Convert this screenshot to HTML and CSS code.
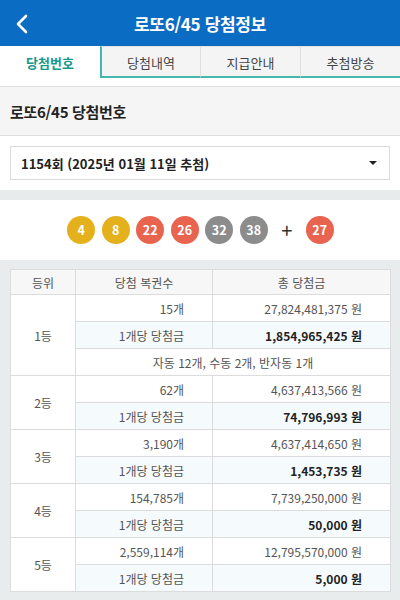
FILE: index.html
```html
<!DOCTYPE html>
<html lang="ko">
<head>
<meta charset="utf-8">
<title>로또6/45 당첨정보</title>
<link rel="stylesheet" href="styles.css">
</head>
<body>
<header class="appbar">
  <span class="back">
    <svg width="14" height="20" viewBox="0 0 14 20"><path d="M11 2 L3 10 L11 18" fill="none" stroke="#fff" stroke-width="2.6" stroke-linecap="round" stroke-linejoin="round"/></svg>
  </span>
  <h1 class="appbar-title">로또6/45 당첨정보</h1>
  <span></span>
</header>
<nav class="tabs">
  <a class="tab active">당첨번호</a>
  <a class="tab after-active">당첨내역</a>
  <a class="tab">지급안내</a>
  <a class="tab">추첨방송</a>
</nav>
<div class="spacer"></div>
<div class="title-bar">로또6/45 당첨번호</div>
<div class="select-wrap">
  <div class="select">
    <span>1154회 (2025년 01월 11일 추첨)</span>
    <span class="caret"></span>
  </div>
</div>
<div class="band"></div>
<div class="balls">
  <span class="ball yellow">4</span>
  <span class="ball yellow">8</span>
  <span class="ball red">22</span>
  <span class="ball red">26</span>
  <span class="ball gray">32</span>
  <span class="ball gray">38</span>
  <span class="plus">+</span>
  <span class="ball red">27</span>
</div>
<div class="table-wrap">
  <table class="prize">
    <thead>
      <tr><th class="c1">등위</th><th class="c2">당첨 복권수</th><th class="c3">총 당첨금</th></tr>
    </thead>
    <tbody>
      <tr><td rowspan="3" class="rank">1등</td><td class="num">15개</td><td class="num">27,824,481,375 원</td></tr>
      <tr class="per"><td class="num">1개당 당첨금</td><td class="num strong">1,854,965,425 원</td></tr>
      <tr><td colspan="2" class="note">자동 12개, 수동 2개, 반자동 1개</td></tr>
      <tr><td rowspan="2" class="rank">2등</td><td class="num">62개</td><td class="num">4,637,413,566 원</td></tr>
      <tr class="per"><td class="num">1개당 당첨금</td><td class="num strong">74,796,993 원</td></tr>
      <tr><td rowspan="2" class="rank">3등</td><td class="num">3,190개</td><td class="num">4,637,414,650 원</td></tr>
      <tr class="per"><td class="num">1개당 당첨금</td><td class="num strong">1,453,735 원</td></tr>
      <tr><td rowspan="2" class="rank">4등</td><td class="num">154,785개</td><td class="num">7,739,250,000 원</td></tr>
      <tr class="per"><td class="num">1개당 당첨금</td><td class="num strong">50,000 원</td></tr>
      <tr><td rowspan="2" class="rank">5등</td><td class="num">2,559,114개</td><td class="num">12,795,570,000 원</td></tr>
      <tr class="per"><td class="num">1개당 당첨금</td><td class="num strong">5,000 원</td></tr>
    </tbody>
  </table>
</div>
</body>
</html>
```

FILE: styles.css
```css
* { box-sizing: border-box; }
html, body {
  margin: 0;
  padding: 0;
  width: 400px;
  height: 600px;
  overflow: hidden;
  background: #e9ecec;
  font-family: "Noto Sans CJK KR", "Noto Sans", sans-serif;
  color: #333;
}
.appbar {
  height: 46px;
  background: #0b6cc4;
  display: grid;
  grid-template-columns: 46px 1fr 46px;
  align-items: center;
}
.back {
  display: flex;
  align-items: center;
  padding-left: 15px;
  padding-top: 1px;
}
.appbar-title {
  margin: 0;
  text-align: center;
  color: #fff;
  font-size: 17px;
  font-weight: 700;
  letter-spacing: -0.3px;
}
.tabs {
  display: grid;
  grid-template-columns: repeat(4, 1fr);
  height: 32px;
  background: #fff;
}
.tab {
  display: flex;
  align-items: center;
  justify-content: center;
  font-size: 13px;
  color: #444;
  background: #f4f4f4;
  border-top: 1px solid #e2e2e2;
  border-left: 1px solid #e0e0e0;
  border-bottom: 2px solid #45b8ae;
  padding-top: 1px;
}
.tab.active {
  background: #fff;
  border: none;
  color: #15998c;
  font-weight: 700;
}
.tab.after-active {
  border-left: 2px solid #45b8ae;
}
.spacer {
  height: 9px;
  background: #fff;
  border-bottom: 1px solid #dedede;
}
.title-bar {
  height: 49px;
  background: #f5f5f5;
  border-bottom: 1px solid #dddddd;
  display: flex;
  align-items: center;
  padding-left: 10px;
  font-size: 15px;
  font-weight: 700;
  color: #222;
  letter-spacing: -0.3px;
}
.select-wrap {
  background: #fff;
  padding: 10px 10px 10px 10px;
}
.select {
  height: 34px;
  border: 1px solid #dcdcdc;
  display: flex;
  align-items: center;
  justify-content: space-between;
  padding: 0 10px 0 10px;
  font-size: 13px;
  font-weight: 700;
  color: #222;
}
.caret {
  width: 0;
  height: 0;
  border-left: 4px solid transparent;
  border-right: 4px solid transparent;
  border-top: 4px solid #222;
  margin-right: 2px;
}
.band {
  height: 10px;
  background: #e8ebec;
}
.balls {
  height: 60px;
  background: #fff;
  display: flex;
  align-items: center;
  justify-content: center;
  gap: 6.5px;
  padding-left: 1px;
  padding-bottom: 1px;
}
.ball {
  width: 28px;
  height: 28px;
  border-radius: 50%;
  display: flex;
  align-items: center;
  justify-content: center;
  color: #fff;
  font-size: 12.5px;
  font-weight: 700;
}
.ball.yellow { background: #e4b01b; }
.ball.red { background: #e9644f; }
.ball.gray { background: #8c8c8c; }
.plus {
  width: 25px;
  text-align: center;
  font-size: 20px;
  font-weight: 400;
  color: #333;
  line-height: 28px;
}
.table-wrap {
  padding: 9px 10px 0 10px;
}
.prize {
  width: 380px;
  border-collapse: collapse;
  background: #fff;
  font-size: 12px;
  color: #555;
  table-layout: fixed;
}
.prize th, .prize td {
  border: 1px solid #dcdcdc;
  padding: 0;
  height: 27px;
}
.prize th {
  height: 25px;
  background: #f7f7f7;
  font-weight: 400;
  color: #555;
}
.c1 { width: 65px; }
.c2 { width: 137px; }
.c3 { width: 178px; }
.rank { text-align: center; }
.num {
  text-align: right;
  padding-right: 28px !important;
}
.per td.num { background: #f5fbfd; }
.strong { font-weight: 700; color: #222; }
.note { text-align: center; }
```
